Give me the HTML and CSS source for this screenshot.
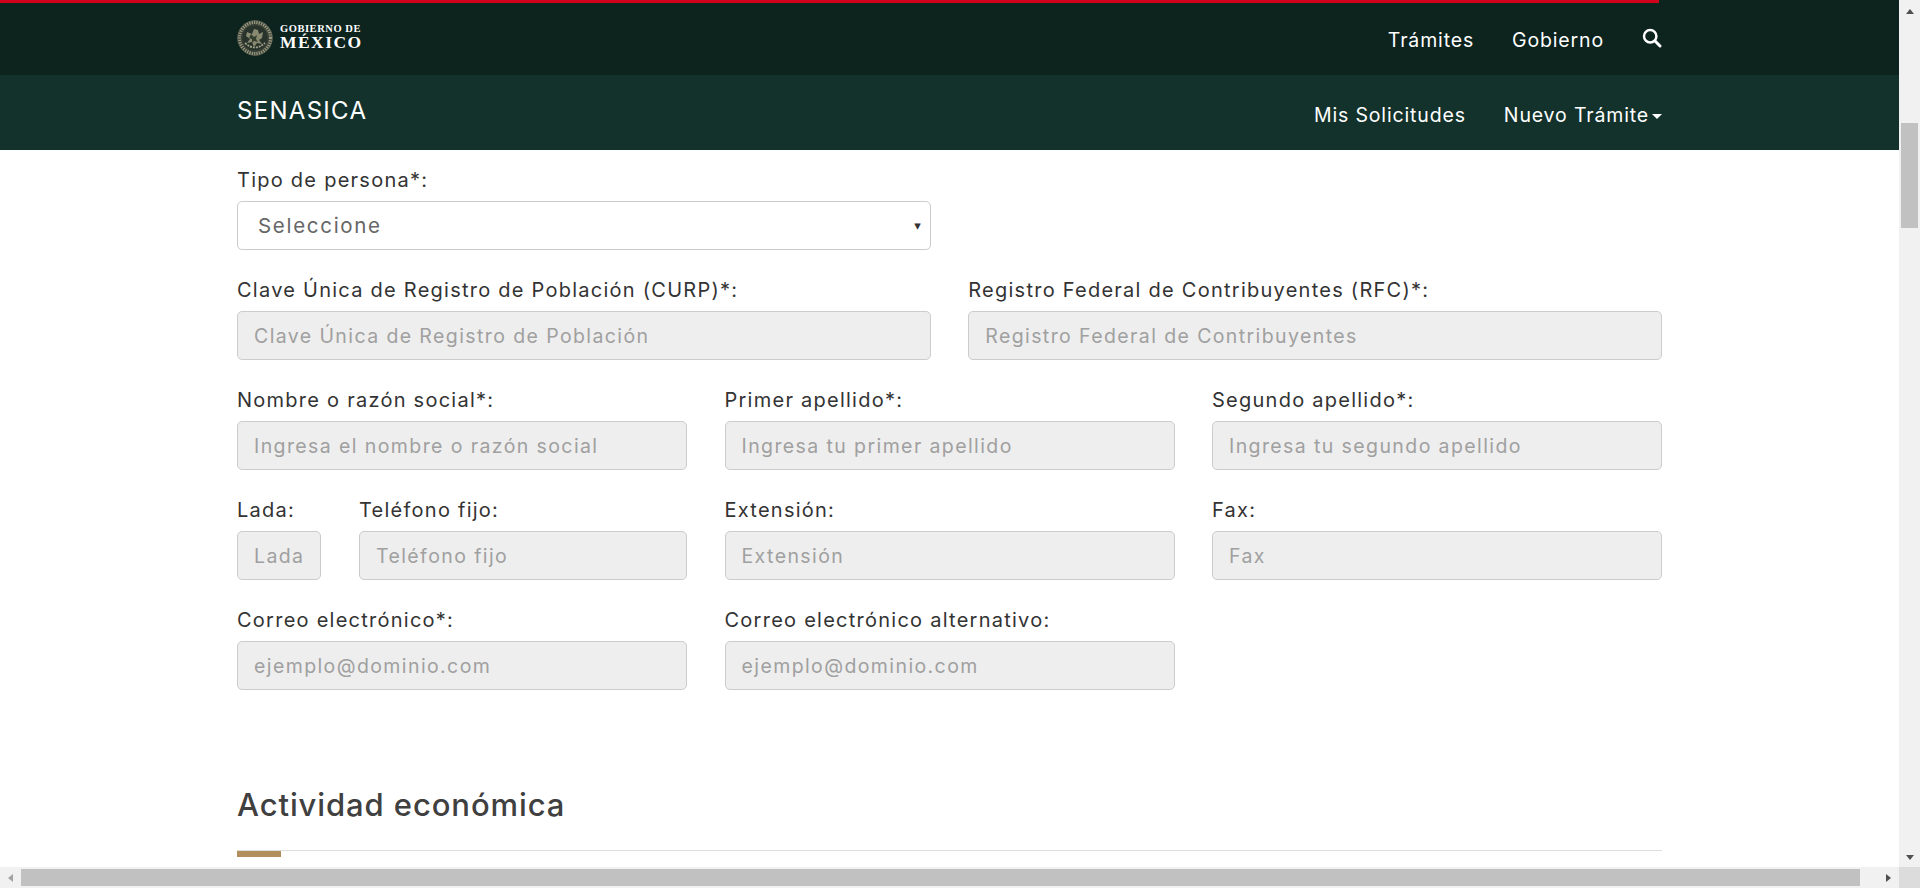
FILE: index.html
```html
<!DOCTYPE html>
<html lang="es">
<head>
<meta charset="utf-8">
<title>SENASICA</title>
<link rel="stylesheet" href="styles.css">
</head>
<body>
<div class="window">
  <div class="upper">
    <div class="viewport">
      <header class="topbar">
        <div class="redline"></div>
        <div class="container topbar-inner">
          <a class="logo" href="#">
            <svg class="emblem" viewBox="0 0 36 36" aria-hidden="true">
              <circle cx="18" cy="18" r="17.5" fill="#3c4338"/>
              <circle cx="18" cy="18" r="15.6" fill="none" stroke="#9a9a82" stroke-width="3.2" stroke-dasharray="1.3 1.1"/>
              <circle cx="18" cy="18" r="17.3" fill="none" stroke="#6f7060" stroke-width=".7"/>
              <circle cx="18" cy="18" r="12.6" fill="#27332b"/>
              <path d="M10 12l5 2 2-5 4 1 1 4 4-2-1 6-3 2 3 4-5-1-3 4-2-5-5 1 3-4-4-3z" fill="#8a8a72"/>
              <path d="M14 14l3 3 3-2-1 4 2 3-4-1-2 2 0-4-3-1z" fill="#34402f"/>
              <path d="M8 23q10 9 20 0" fill="none" stroke="#a3a38a" stroke-width="1.7" stroke-dasharray="2 1"/>
            </svg>
            <span class="logo-text"><span class="logo-small">GOBIERNO DE</span><span class="logo-big">MÉXICO</span></span>
          </a>
          <nav class="topnav">
            <a href="#">Trámites</a>
            <a href="#">Gobierno</a>
            <a href="#" class="search" aria-label="Buscar">
              <svg viewBox="0 0 20 20" width="20" height="20" aria-hidden="true"><circle cx="8.2" cy="8.2" r="6.2" fill="none" stroke="#fff" stroke-width="2.5"/><path d="M12.8 12.8l5.2 5.2" stroke="#fff" stroke-width="3" stroke-linecap="round"/></svg>
            </a>
          </nav>
        </div>
      </header>
      <div class="subbar">
        <div class="container subbar-inner">
          <a class="brand" href="#">SENASICA</a>
          <nav class="subnav">
            <a href="#">Mis Solicitudes</a>
            <a href="#">Nuevo Trámite<span class="caret"></span></a>
          </nav>
        </div>
      </div>
      <main class="container form">
        <div class="row row-2">
          <div class="field">
            <label>Tipo de persona*:</label>
            <div class="select-wrap">
              <select class="control select"><option>Seleccione</option></select>
              <span class="select-arrow">▾</span>
            </div>
          </div>
        </div>
        <div class="row row-2">
          <div class="field"><label>Clave Única de Registro de Población (CURP)*:</label><input class="control" disabled placeholder="Clave Única de Registro de Población"></div>
          <div class="field"><label>Registro Federal de Contribuyentes (RFC)*:</label><input class="control" disabled placeholder="Registro Federal de Contribuyentes"></div>
        </div>
        <div class="row row-3">
          <div class="field"><label>Nombre o razón social*:</label><input class="control" disabled placeholder="Ingresa el nombre o razón social"></div>
          <div class="field"><label>Primer apellido*:</label><input class="control" disabled placeholder="Ingresa tu primer apellido"></div>
          <div class="field"><label>Segundo apellido*:</label><input class="control" disabled placeholder="Ingresa tu segundo apellido"></div>
        </div>
        <div class="row row-3">
          <div class="phone">
            <div class="field"><label>Lada:</label><input class="control" disabled placeholder="Lada"></div>
            <div class="field"><label>Teléfono fijo:</label><input class="control" disabled placeholder="Teléfono fijo"></div>
          </div>
          <div class="field"><label>Extensión:</label><input class="control" disabled placeholder="Extensión"></div>
          <div class="field"><label>Fax:</label><input class="control" disabled placeholder="Fax"></div>
        </div>
        <div class="row row-3">
          <div class="field"><label>Correo electrónico*:</label><input class="control" disabled placeholder="ejemplo@dominio.com"></div>
          <div class="field"><label>Correo electrónico alternativo:</label><input class="control" disabled placeholder="ejemplo@dominio.com"></div>
        </div>
        <section class="section">
          <h2>Actividad económica</h2>
          <div class="rule"><span></span></div>
        </section>
      </main>
    </div>
    <div class="vscroll">
      <span class="arrow arrow-up"></span>
      <div class="vtrack"><div class="vthumb"></div></div>
      <span class="arrow arrow-down"></span>
    </div>
  </div>
  <div class="hscroll">
    <div class="hbar">
      <span class="arrow arrow-left"></span>
      <div class="hthumb"></div>
      <span class="arrow arrow-right"></span>
    </div>
    <div class="corner"></div>
  </div>
</div>
</body>
</html>
```
FILE: styles.css
```css
* { box-sizing: border-box; }
html, body { margin: 0; height: 100%; overflow: hidden; }
body { font-family: Inter, "DejaVu Sans", sans-serif; color: #333; background: #fff; }
a { color: inherit; text-decoration: none; }

.window { width: 1920px; height: 888px; display: flex; flex-direction: column; }
.upper { flex: 1; display: flex; min-height: 0; }
.viewport { flex: 1; min-width: 0; overflow: hidden; }
.container { width: 1425px; margin-left: 237px; }

.topbar { height: 75px; background: #0c231e; color: #fff; }
.redline { height: 3px; width: 1659px; background: #d0021b; }
.topbar-inner { height: 72px; display: flex; align-items: center; justify-content: space-between; }
.logo { display: flex; align-items: center; gap: 7px; margin-top: -3px; }
.emblem { width: 36px; height: 36px; display: block; }
.logo-text { display: flex; flex-direction: column; font-family: "Liberation Serif", serif; font-weight: 700; line-height: 1; }
.logo-small { font-size: 10.5px; letter-spacing: .55px; }
.logo-big { font-size: 17.5px; letter-spacing: 1.45px; }
.topnav { display: flex; align-items: center; gap: 38px; font-size: 19.5px; letter-spacing: .85px; }
.topnav a:not(.search) { margin-top: 1px; }
.search { display: block; height: 20px; margin-top: -3px; }
.search svg { display: block; }

.subbar { height: 75px; background: #13322b; color: #fff; }
.subbar-inner { height: 75px; display: flex; align-items: center; justify-content: space-between; }
.brand { font-size: 24px; letter-spacing: 1.3px; margin-top: -4px; }
.subnav { display: flex; gap: 38px; font-size: 19.5px; letter-spacing: .85px; margin-top: 5px; }
.caret { display: inline-block; width: 0; height: 0; margin-left: 3px; vertical-align: middle; border-top: 5px solid #fff; border-left: 5px solid transparent; border-right: 5px solid transparent; }

.form { padding-top: 17px; }
.row { display: grid; column-gap: 37.5px; margin-bottom: 27px; }
.row-2 { grid-template-columns: 1fr 1fr; }
.row-3 { grid-template-columns: repeat(3, 1fr); }
.phone { display: grid; grid-template-columns: 84px 1fr; column-gap: 38px; }
.field label { display: block; height: 27px; margin-bottom: 7px; font-size: 20px; letter-spacing: 1.25px; line-height: 27px; color: #333; white-space: nowrap; }
.control { display: block; width: 100%; height: 49px; padding: 0 16px; font: inherit; font-size: 19.5px; letter-spacing: 1.4px; border: 1px solid #ccc; border-radius: 5px; background: #eee; color: #555; outline: 0; }
.control::placeholder { color: #a0a0a0; opacity: 1; }
.select-wrap { position: relative; }
.select { background: #fff; appearance: none; padding-left: 20px; font-size: 20.5px; letter-spacing: 1.7px; color: #666; opacity: 1; }
.select-arrow { position: absolute; right: 10px; top: 14px; font-size: 13px; line-height: 20px; letter-spacing: 0; color: #333; pointer-events: none; }

.section { margin-top: 95px; }
.section h2 { margin: 0; font-size: 31px; letter-spacing: .9px; line-height: 40px; font-weight: 500; color: #404040; }
.rule { margin-top: 25px; border-top: 1px solid #ddd; }
.rule span { display: block; width: 44px; height: 6px; background: #b38e5d; }

.vscroll { width: 21px; background: #f1f1f1; display: flex; flex-direction: column; align-items: center; }
.vtrack { flex: 1; width: 100%; padding: 0 2px; }
.vthumb { height: 105px; margin-top: 102px; background: #c1c1c1; }
.hscroll { height: 21px; display: flex; background: #f1f1f1; }
.hbar { flex: 1; display: flex; align-items: center; }
.hthumb { width: 1839px; height: 17px; background: #c1c1c1; margin-left: 8px; }
.corner { width: 21px; background: #dcdcdc; }
.arrow { display: block; width: 0; height: 0; flex: none; }
.arrow-up { margin-top: 9px; border-bottom: 5px solid #505050; border-left: 4.5px solid transparent; border-right: 4.5px solid transparent; margin-bottom: 7px; }
.arrow-down { margin-bottom: 7px; border-top: 5px solid #505050; border-left: 4.5px solid transparent; border-right: 4.5px solid transparent; }
.arrow-left { margin-left: 8px; border-right: 5px solid #a3a3a3; border-top: 4.5px solid transparent; border-bottom: 4.5px solid transparent; }
.arrow-right { margin-left: 26px; border-left: 5px solid #505050; border-top: 4.5px solid transparent; border-bottom: 4.5px solid transparent; }
```
